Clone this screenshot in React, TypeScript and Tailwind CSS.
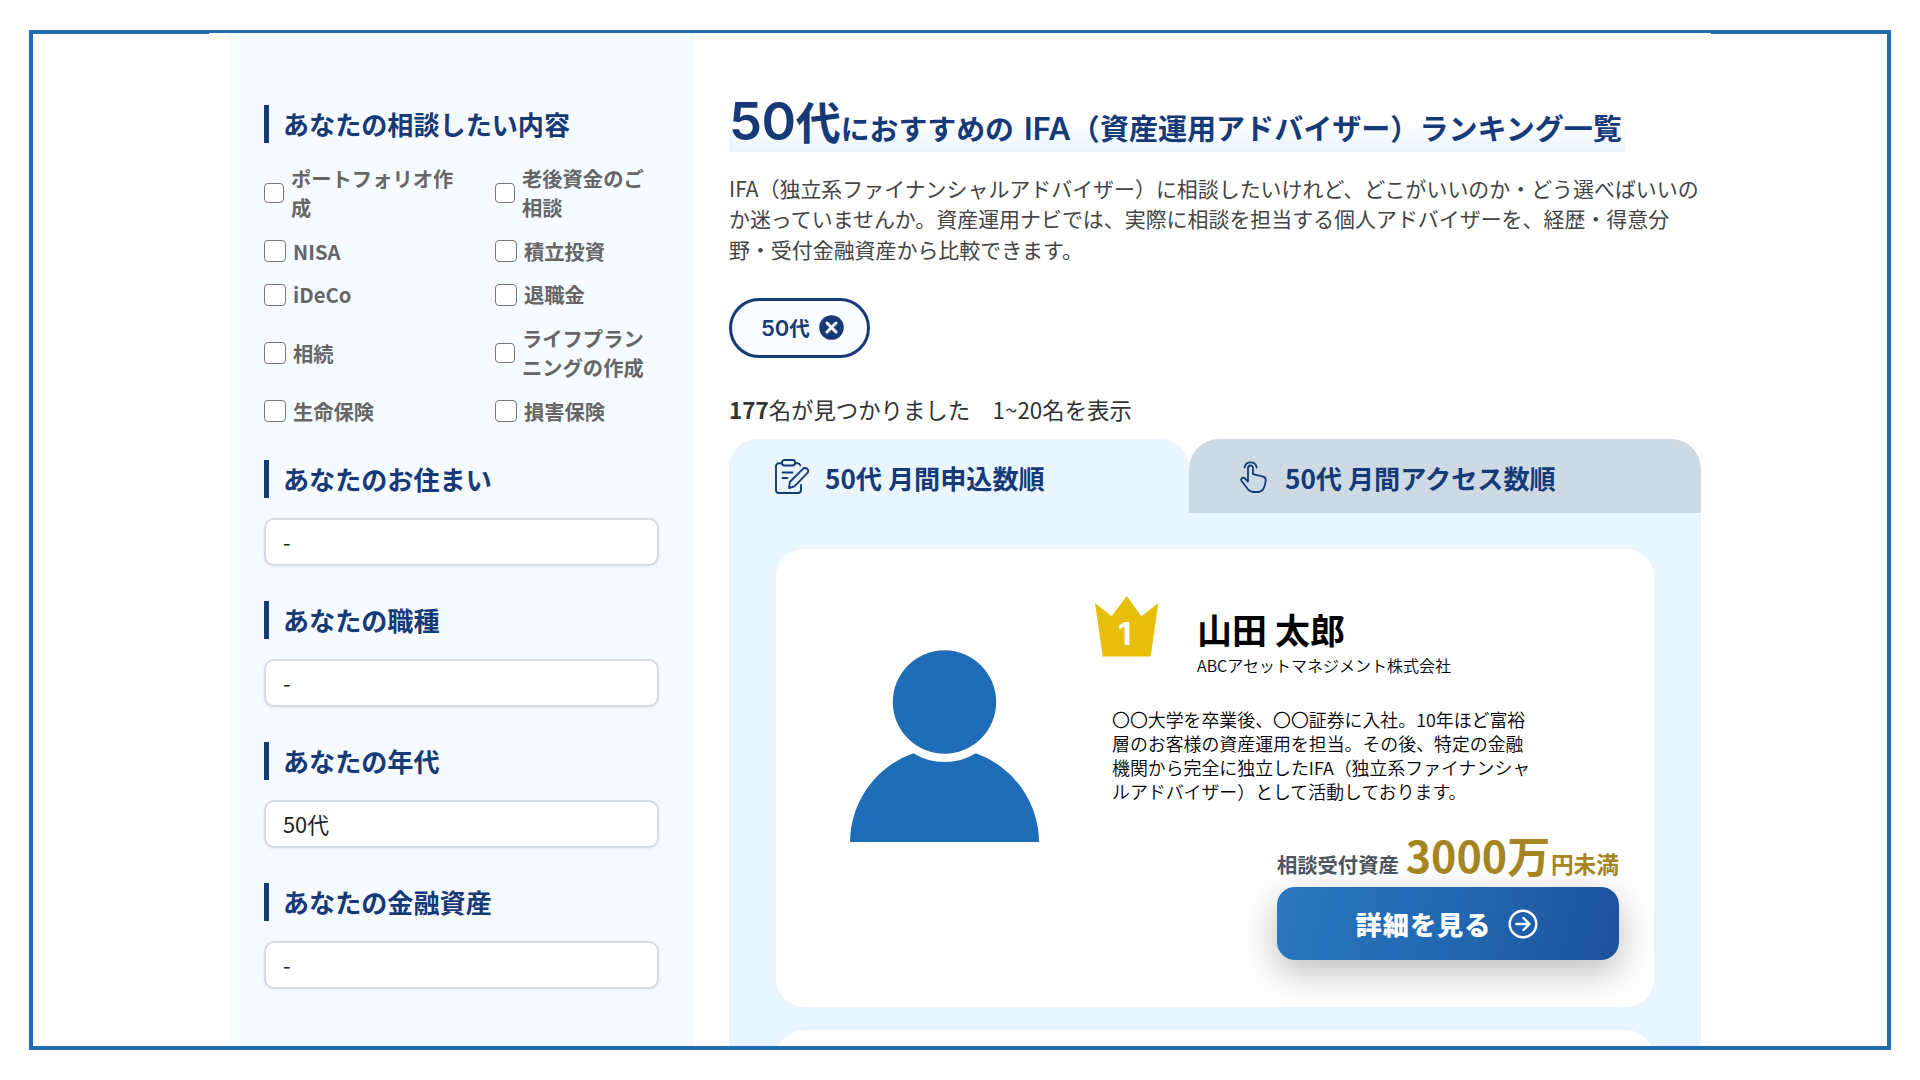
import React from "react";

const concerns = [
  { label: ["ポートフォリオ作", "成"], small: true },
  { label: ["老後資金のご", "相談"], small: true },
  { label: ["NISA"] },
  { label: ["積立投資"] },
  { label: ["iDeCo"] },
  { label: ["退職金"] },
  { label: ["相続"] },
  { label: ["ライフプラン", "ニングの作成"], small: true },
  { label: ["生命保険"] },
  { label: ["損害保険"] },
];

const filters = [
  { title: "あなたのお住まい", value: "-" },
  { title: "あなたの職種", value: "-" },
  { title: "あなたの年代", value: "50代" },
  { title: "あなたの金融資産", value: "-" },
];

const SideHeading: React.FC<{ children: React.ReactNode }> = ({ children }) => (
  <h2 className="h-[38px] border-l-[5px] border-[#163a78] pl-3.5 text-[26.1px] leading-[38px] font-bold text-[#163a78] whitespace-nowrap">
    {children}
  </h2>
);

const Sidebar: React.FC = () => {
  return (
    <aside className="ml-5 w-[465px] shrink-0 border-l-[10px] border-[#f8fcff] bg-[#f5fbff] pt-[72px] pr-[35px] pl-[25px]">
      <SideHeading>あなたの相談したい内容</SideHeading>
      <div className="mt-[21px] mb-[34px] grid grid-cols-[231px_164px] gap-y-[14.6px] text-[20.3px] leading-[29.1px] font-bold text-[#666]">
        {concerns.map((item) => (
          <label key={item.label[0]} className="flex items-center gap-[7.500px] whitespace-nowrap">
            <span
              className={
                item.small
                  ? "h-[20px] w-[19.5px] shrink-0 rounded-[4px] border-[1.5px] border-[#777] bg-white"
                  : "h-[22px] w-[21.5px] shrink-0 rounded-[4px] border-[1.5px] border-[#777] bg-white"
              }
            />
            <span>
              {item.label.map((line) => (
                <span key={line} className="block">{line}</span>
              ))}
            </span>
          </label>
        ))}
      </div>
      {filters.map((item) => (
        <section key={item.title} className="mb-[35px]">
          <SideHeading>{item.title}</SideHeading>
          <div className="mt-5 h-12 rounded-[10px] border-2 border-[#d3dde2] bg-white pl-[17px] text-[21.8px] leading-[44px] text-[#222] shadow-[0_1px_3px_rgba(0,0,0,0.08)]">
            {item.value}
          </div>
        </section>
      ))}
    </aside>
  );
};

const ClipboardIcon: React.FC = () => (
  <svg className="mt-[2px] h-[35px] w-[35px] shrink-0" viewBox="0 0 35 35" fill="none" stroke="#163a78" strokeWidth="1.9" strokeLinecap="round" strokeLinejoin="round">
    <path d="M7 4.2H4a3 3 0 0 0-3 3V31a3 3 0 0 0 3 3h19a3 3 0 0 0 3-3v-5" />
    <path d="M20 4.2h2.2a3 3 0 0 1 3 2" />
    <rect x="7" y="1" width="13" height="5.5" rx="2.4" />
    <path d="M7.500 13.500h10M7.500 19h5" />
    <path d="M14 29l1-6.300L28 9.900a3 3 0 0 1 4.300 0 3 3 0 0 1 0 4.300L19.500 27.300z" />
  </svg>
);

const TapIcon: React.FC = () => (
  <svg className="mt-[2px] h-8 w-[27px] shrink-0" viewBox="0 0 27 32" fill="none" stroke="#163a78" strokeWidth="1.8" strokeLinecap="round" strokeLinejoin="round">
    <path d="M4.500 6.500a6.200 6.200 0 0 1 12.200 0" />
    <path d="M8 20.500V7a2.500 2.500 0 0 1 5 0v6.200l9.500 2.200a4 4 0 0 1 3.200 4.300c-.3 3-.9 5.500-2.200 8-1.200 2.300-2.700 3.300-5 3.300h-5c-2.300 0-4-.9-5.500-2.700l-6.300-8c-1.500-2.200.6-4.400 2.800-3.200z" />
  </svg>
);

const Crown: React.FC = () => (
  <div className="relative h-[61px] w-[64px] shrink-0">
    <svg className="h-[61px] w-[64px]" viewBox="0 0 64 61">
      <path d="M0 7l16.700 13.300L31.700 0l14.600 20.300L63.300 7l-7.600 53.500h-48z" fill="#e8bf08" />
    </svg>
    <span className="absolute top-[20px] left-[23px] font-['Inter'] text-[31px] leading-9 font-bold text-white">1</span>
  </div>
);

const Avatar: React.FC = () => (
  <svg className="h-[192px] w-[190px] shrink-0" viewBox="0 0 190 192" fill="#1f6db7">
    <circle cx="94.500" cy="52" r="51.700" />
    <path d="M0 192A94.700 94.700 0 0 1 63.200 103.300a60 60 0 0 0 62.600 0A94.700 94.700 0 0 1 189 192z" />
  </svg>
);

const AdvisorCard: React.FC = () => {
  return (
    <article className="flex h-[458px] rounded-[28px] bg-white pr-[35px] pl-[74px]">
      <div className="pt-[101px]">
        <Avatar />
      </div>
      <div className="ml-[55px] flex-1 pt-[47px]">
        <div className="flex">
          <Crown />
          <div className="ml-[38px] whitespace-nowrap text-black">
            <h3 className="mt-[9px] text-[35px] leading-[48px] font-bold">山田 太郎</h3>
            <p className="text-[16px] leading-6 font-[350]">ABCアセットマネジメント株式会社</p>
          </div>
        </div>
        <p className="mt-[31px] ml-[17px] text-[17.9px] leading-[23.9px] font-[350] whitespace-nowrap text-black">
          〇〇大学を卒業後、〇〇証券に入社。10年ほど富裕<br />
          層のお客様の資産運用を担当。その後、特定の金融<br />
          機関から完全に独立したIFA（独立系ファイナンシャ<br />
          ルアドバイザー）として活動しております。
        </p>
        <div className="mt-[22px] ml-auto w-[342px]">
          <div className="flex h-[61px] items-baseline leading-[56px] font-bold whitespace-nowrap">
            <span className="text-[20.3px] text-[#4b5560]">相談受付資産</span>
            <span className="ml-[7px] text-[43px] text-[#a58422]">3000万</span>
            <span className="ml-auto text-[22.7px] text-[#a58422]">円未満</span>
          </div>
          <button className="flex h-[73px] w-full items-center justify-center rounded-[18px] bg-linear-[105deg] from-[#2a78bf] via-[#2268b2] to-[#1c529e] pt-[3px] pr-[2px] text-[26.2px] font-black tracking-[1px] text-white shadow-[0_12px_36px_rgba(0,0,0,0.27)]">
            <span>詳細を見る</span>
            <svg className="-mt-[2px] ml-[17px] h-[30px] w-[30px]" viewBox="0 0 30 30" fill="none" stroke="white" strokeWidth="2.400" strokeLinecap="round" strokeLinejoin="round">
              <circle cx="15" cy="15" r="13.300" />
              <path d="M8.500 15h13M15.500 9l6 6-6 6" />
            </svg>
          </button>
        </div>
      </div>
    </article>
  );
};

const Ranking: React.FC = () => {
  return (
    <main className="ml-[35px] w-[972px] shrink-0 pt-[59px]">
      <h1 className="h-[60px] w-[896px] bg-linear-to-b from-transparent from-50% to-[#e8f4fe] leading-[58px] font-bold whitespace-nowrap text-[#163a78]">
        <span className="font-['Inter'] text-[52.500px] font-semibold tracking-[-0.5px]">50</span>
        <span className="text-[45px]">代</span>
        <span className="text-[28.9px]">におすすめの</span>
        <span className="ml-[10px] font-['Inter'] text-[31.2px] font-semibold">IFA</span>
        <span className="text-[29.05px]">（資産運用アドバイザー）ランキング一覧</span>
      </h1>
      <p className="mt-[21px] text-[20.94px] leading-[30.3px] whitespace-nowrap text-[#444]">
        IFA（独立系ファイナンシャルアドバイザー）に相談したいけれど、どこがいいのか・どう選べばいいの<br />
        か迷っていませんか。資産運用ナビでは、実際に相談を担当する個人アドバイザーを、経歴・得意分<br />
        野・受付金融資産から比較できます。
      </p>
      <div className="mt-[34px] flex h-[60px] w-[141px] items-center rounded-full border-3 border-[#163a78] bg-[#fbfcff] pl-[29px] text-[#163a78]">
        <span className="text-[20.500px] leading-7 font-bold whitespace-nowrap">
          <span className="font-['Inter'] text-[22px] font-semibold">50</span>代
        </span>
        <svg className="ml-[9px] h-[25px] w-[25px] shrink-0" viewBox="0 0 25 25">
          <circle cx="12.500" cy="12.500" r="12.300" fill="#163a78" />
          <path d="M8 8l9 9M17 8l-9 9" stroke="white" strokeWidth="3" strokeLinecap="round" />
        </svg>
      </div>
      <p className="mt-[34px] text-[22.4px] leading-[34px] whitespace-nowrap text-[#333]">
        <b>177</b>名が見つかりました　1~20名を表示
      </p>
      <div className="mt-[13px] flex h-[74px] text-[26.15px] leading-9 font-bold whitespace-nowrap text-[#163a78]">
        <div className="flex w-[460px] items-center rounded-t-[28px] bg-[#eaf6ff] pl-[46px]">
          <ClipboardIcon />
          <span className="mt-[5px] ml-[15px]">50代 月間申込数順</span>
        </div>
        <div className="flex-1 bg-linear-to-b from-white from-50% to-[#eaf6ff] to-50%">
          <div className="flex h-full items-center rounded-t-[30px] bg-[#cddae4] pl-[51px]">
            <TapIcon />
            <span className="mt-[5px] ml-[18px]">50代 月間アクセス数順</span>
          </div>
        </div>
      </div>
      <div className="flex flex-col gap-[23px] bg-[#eaf6ff] px-[47px] pt-[36px]">
        <AdvisorCard />
        <article className="h-[200px] rounded-[28px] bg-white" />
      </div>
    </main>
  );
};

const App: React.FC = () => {
  return (
    <div className="h-[1080px] w-[1920px] overflow-hidden bg-white px-[29px] py-[30px] font-['Noto_Sans_CJK_JP',sans-serif]">
      <div className="h-[1020px] w-[1862px] border-4 border-[#226bb5]">
        <div className="-mt-px ml-[176px] flex h-[1013px] w-[1502px] overflow-hidden bg-white">
          <Sidebar />
          <Ranking />
        </div>
      </div>
    </div>
  );
};

export default App;
